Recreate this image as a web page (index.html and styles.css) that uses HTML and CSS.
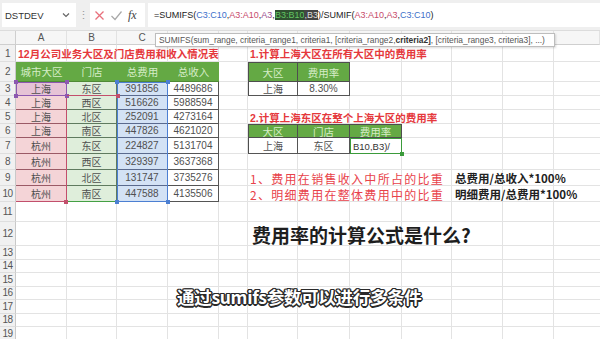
FILE: index.html
```html
<!DOCTYPE html>
<html>
<head>
<meta charset="utf-8">
<link rel="stylesheet" href="styles.css">
</head>
<body>
<div class="app">
  <div class="topbar">
    <div class="namebox"><span class="name">DSTDEV</span>
      <svg class="chev" width="8" height="6" viewBox="0 0 8 6"><path d="M1 1.5 L4 4.5 L7 1.5" fill="none" stroke="#666" stroke-width="1.2"/></svg>
    </div>
    <div class="sep">&#8942;</div>
    <div class="fxbox">
      <svg width="11" height="11" viewBox="0 0 11 11"><path d="M1.5 1.5 L9.5 9.5 M9.5 1.5 L1.5 9.5" stroke="#e8707c" stroke-width="1.3" fill="none"/></svg>
      <svg width="13" height="11" viewBox="0 0 13 11"><path d="M1.5 6 L5 9.5 L11.5 1.5" stroke="#a8a8a8" stroke-width="1.2" fill="none"/></svg>
      <span class="fx">fx</span>
    </div>
    <div class="formula"><span>=SUMIFS(</span><span class="fb">C3:C10</span><span>,</span><span class="fr">A3:A10</span><span>,</span><span class="fp">A3</span><span>,</span><span class="hg">B3:B10</span><span class="hd">,B3</span><span>)/SUMIF(</span><span class="fr">A3:A10</span><span>,</span><span class="fr">A3</span><span>,</span><span class="fb">C3:C10</span><span>)</span></div>
  </div>

  <div class="sheet">
    <div class="corner ch r0"></div>
    <div class="colh cA r0">A</div><div class="colh cB r0">B</div><div class="colh cC r0">C</div><div class="colh cD r0"></div><div class="colh cE r0"></div><div class="colh cF r0"></div><div class="colh cG r0"></div><div class="colh cH r0"></div><div class="colh cI r0"></div><div class="colh cJ r0"></div><div class="colh cK r0"></div><div class="colh cL r0"></div>

    <div class="rh ch r1">1</div><div class="rh ch r2">2</div><div class="rh ch r3">3</div><div class="rh ch r4">4</div><div class="rh ch r5">5</div><div class="rh ch r6">6</div><div class="rh ch r7">7</div><div class="rh ch r8">8</div><div class="rh ch r9">9</div><div class="rh ch r10">10</div><div class="rh ch r11">11</div><div class="rh ch r12">12</div><div class="rh ch r13">13</div><div class="rh ch r14">14</div><div class="rh ch r15">15</div><div class="rh ch r16">16</div><div class="rh ch r17">17</div><div class="rh ch r18">18</div><div class="rh ch r19">19</div>

    <div class="hl r1"></div><div class="hl r2"></div><div class="hl r3"></div><div class="hl r4"></div><div class="hl r5"></div><div class="hl r6"></div><div class="hl r7"></div><div class="hl r8"></div><div class="hl r9"></div><div class="hl r10"></div><div class="hl r11"></div><div class="hl r12"></div><div class="hl r13"></div><div class="hl r14"></div><div class="hl r15"></div><div class="hl r16"></div><div class="hl r17"></div><div class="hl r18"></div><div class="hl r19"></div>
    <div class="vl cA"></div><div class="vl cB"></div><div class="vl cC"></div><div class="vl cD"></div><div class="vl cE"></div><div class="vl cF"></div><div class="vl cG"></div><div class="vl cH"></div><div class="vl cI"></div><div class="vl cJ"></div><div class="vl cK"></div>

    <!-- left table -->
    <div class="title t-left">12月公司业务大区及门店费用和收入情况表</div>
    <div class="th thl cA r2">城市大区</div><div class="th thl cB r2">门店</div><div class="th thl cC r2">总费用</div><div class="th thl cD r2">总收入</div>

    <div class="td pa pa3 cA r3">上海</div><div class="td gb cB r3">东区</div><div class="td bc cC r3">391856</div><div class="td wd cD r3">4489686</div>
    <div class="td pa cA r4">上海</div><div class="td gb cB r4">西区</div><div class="td bc cC r4">516626</div><div class="td wd cD r4">5988594</div>
    <div class="td pa cA r5">上海</div><div class="td gb cB r5">北区</div><div class="td bc cC r5">252091</div><div class="td wd cD r5">4273164</div>
    <div class="td pa cA r6">上海</div><div class="td gb cB r6">南区</div><div class="td bc cC r6">447826</div><div class="td wd cD r6">4621020</div>
    <div class="td pa cA r7">杭州</div><div class="td gb cB r7">东区</div><div class="td bc cC r7">224827</div><div class="td wd cD r7">5131704</div>
    <div class="td pa cA r8">杭州</div><div class="td gb cB r8">西区</div><div class="td bc cC r8">329397</div><div class="td wd cD r8">3637368</div>
    <div class="td pa cA r9">杭州</div><div class="td gb cB r9">北区</div><div class="td bc cC r9">131747</div><div class="td wd cD r9">3735276</div>
    <div class="td pa cA r10">杭州</div><div class="td gb cB r10">南区</div><div class="td bc cC r10">447588</div><div class="td wd cD r10">4135506</div>

    <div class="sel sel-a"></div>
    <div class="sel sel-b"><i class="hd-bl hrc"></i></div>
    <div class="sel sel-c"><i class="hd-tl hbc"></i><i class="hd-tr hbc"></i><i class="hd-bl hbc"></i><i class="hd-br hbc"></i></div>
    <div class="sel sel-a3"><i class="hd-tl hpc"></i><i class="hd-tr hpc"></i><i class="hd-bl hpc"></i><i class="hd-br hpc"></i></div>
    <div class="sel sel-b3"><i class="hd-br hrc"></i></div>

    <!-- right table 1 -->
    <div class="title t-r1">1.计算上海大区在所有大区中的费用率</div>
    <div class="th thr bl bt cF r2">大区</div><div class="th thr bt cG r2">费用率</div>
    <div class="td wd bl cF r3">上海</div><div class="td wd cG r3">8.30%</div>

    <!-- right table 2 -->
    <div class="title t-r2">2.计算上海东区在整个上海大区的费用率</div>
    <div class="th thr bl bt cF r6">大区</div><div class="th thr bt cG r6">门店</div><div class="th thr bt cH r6">费用率</div>
    <div class="td wd bl cF r7">上海</div><div class="td wd cG r7">东区</div><div class="td wd edit cH r7">B10,B3)/<i class="hd-br hgc"></i></div>

    <div class="note n1"><span class="nred">1、费用在销售收入中所占的比重</span><span class="nblk">总费用/总收入*100%</span></div>
    <div class="note n2"><span class="nred">2、明细费用在整体费用中的比重</span><span class="nblk">明细费用/总费用*100%</span></div>

    <div class="question">费用率的计算公式是什么?</div>
  </div>

  <div class="tooltip">SUMIFS(sum_range, criteria_range1, criteria1, [criteria_range2, <b>criteria2]</b>, [criteria_range3, criteria3], ...)</div>
  <div class="subtitle">通过sumifs参数可以进行多条件</div>
</div>
</body>
</html>
```

FILE: styles.css
```css
* { box-sizing: border-box; margin: 0; padding: 0; }
body { width: 600px; height: 339px; overflow: hidden; background: #fff;
  font-family: "Liberation Sans", "Noto Sans CJK SC", sans-serif; }
.app { position: relative; width: 600px; height: 339px; overflow: hidden; }

/* top bar */
.topbar { height: 31px; background: #efefef; display: flex; align-items: center; padding: 3px 0 3px 2px; border-bottom: 1px solid #dcdcdc; }
.namebox { width: 74px; height: 24px; background: #fff; display: flex; align-items: center; justify-content: space-between; padding: 0 6px 0 3px; }
.name { font-size: 9.5px; color: #333; }
.sep { width: 14px; text-align: center; color: #999; font-size: 11px; }
.fxbox { width: 55px; height: 24px; background: #fff; display: flex; align-items: center; gap: 5px; padding-left: 4px; }
.fx { font-family: "Liberation Serif", serif; font-style: italic; font-size: 12px; color: #444; }
.formula { flex: 1; height: 24px; margin-left: 3px; background: #fff; display: flex; align-items: center; padding-left: 6px; font-size: 9px; color: #222; white-space: nowrap; }
.fb { color: #3d6fca; }
.fr { color: #c74b6b; }
.fp { color: #9a4f8f; }
.hg { background: #2f5030; color: #62c462; }
.hd { background: #444; color: #ddd; }

/* sheet grid */
.sheet { display: grid;
  grid-template-columns: 16px 51px 50px 51px 51px 29px 50px 52px 52px 50px 51px 51px 1fr;
  grid-template-rows: 14px 17px 20px repeat(4, 14px) repeat(4, 16px) 20px 24px repeat(7, 13.5px); }

.r0{grid-row:1}.r1{grid-row:2}.r2{grid-row:3}.r3{grid-row:4}.r4{grid-row:5}.r5{grid-row:6}.r6{grid-row:7}.r7{grid-row:8}.r8{grid-row:9}.r9{grid-row:10}.r10{grid-row:11}.r11{grid-row:12}.r12{grid-row:13}.r13{grid-row:14}.r14{grid-row:15}.r15{grid-row:16}.r16{grid-row:17}.r17{grid-row:18}.r18{grid-row:19}.r19{grid-row:20}
.ch{grid-column:1}.cA{grid-column:2}.cB{grid-column:3}.cC{grid-column:4}.cD{grid-column:5}.cE{grid-column:6}.cF{grid-column:7}.cG{grid-column:8}.cH{grid-column:9}.cI{grid-column:10}.cJ{grid-column:11}.cK{grid-column:12}.cL{grid-column:13}

.corner { background: #f3f3f3; border-right: 1px solid #cfcfcf; border-bottom: 1px solid #cfcfcf; }
.colh { background: #f6f6f6; border-bottom: 1px solid #cfcfcf; border-right: 1px solid #e2e2e2; font-size: 10px; color: #555; display: flex; align-items: center; justify-content: center; }
.rh { background: #f1f1f1; border-right: 1px solid #c9c9c9; border-bottom: 1px solid #dedede; font-size: 10px; color: #555; display: flex; align-items: center; justify-content: center; letter-spacing: -0.5px; }
.hl { grid-column: 2 / -1; border-bottom: 1px solid #e3e3e3; }
.vl { grid-row: 2 / -1; border-right: 1px solid #e3e3e3; }

.title { grid-row: 2; color: #e5383c; font-weight: bold; font-size: 10.5px; white-space: nowrap; display: flex; align-items: center; padding-left: 2px; }
.t-left { grid-column: 2 / 7; }
.t-r1 { grid-column: 7 / 12; }
.t-r2 { grid-row: 6; grid-column: 7 / 12; }

.th { background: #64a944; display: flex; align-items: center; justify-content: center; font-size: 10.5px; color: #d6edc7; }
.thl { border-bottom: 1px solid #4f8a36; }
.thr { border-right: 1px solid #4e4e4e; border-bottom: 1px solid #4e4e4e; }
.bl { border-left: 1px solid #4e4e4e; }
.bt { border-top: 1px solid #4e4e4e; }
.td { display: flex; align-items: center; justify-content: center; font-size: 10px; color: #505050; border-right: 1px solid #555; border-bottom: 1px solid #555; white-space: nowrap; }
.pa { background: #f4d4d7; border-color: #9a5a66; }
.pa3 { background: #e6c3d6; }
.gb { background: #dfeedb; border-color: #5f7a5f; }
.bc { background: #d3e2f5; border-color: #5a6a8e; }
.wd { background: #fff; }
.edit { justify-content: flex-start; padding-left: 2px; font-size: 9.5px; color: #333; border: 1.5px solid #3b9b3b; position: relative; }

.sel { position: relative; pointer-events: none; }
.sel-a { grid-column: 2; grid-row: 4 / 12; border: 1.5px solid #c24f6c; border-left: none; }
.sel-b { grid-column: 3; grid-row: 4 / 12; border-bottom: 1.5px solid #44a044; }
.sel-c { grid-column: 4; grid-row: 4 / 12; border: 1.5px solid #4c7fd2; }
.sel-a3 { grid-column: 2; grid-row: 4; border: 1.5px solid #8c58b0; }
.sel-b3 { grid-column: 3; grid-row: 4; border-bottom: 1.5px solid #c24f6c; }
.sel i, .edit i { position: absolute; width: 4px; height: 4px; }
.hd-tl { left: -3px; top: -3px; }
.hd-tr { right: -3px; top: -3px; }
.hd-bl { left: -3px; bottom: -3px; }
.hd-br { right: -3px; bottom: -3px; }
.hbc { background: #4c7fd2; }
.hpc { background: #8c58b0; }
.hrc { background: #c24f6c; }
.hgc { background: #3b9b3b; }

.note { grid-column: 7 / 14; display: flex; align-items: center; white-space: nowrap; padding-left: 2px; }
.n1 { grid-row: 10; }
.n2 { grid-row: 11; }
.nred { width: 205px; color: #e8424a; font-size: 12px; letter-spacing: 1.3px; font-family: "Noto Sans CJK SC", sans-serif; }
.nblk { color: #222; font-weight: bold; font-size: 11.5px; font-family: "Noto Sans CJK SC", sans-serif; }
.question { grid-row: 13; grid-column: 7 / 14; display: flex; align-items: center; padding-left: 4px; font-size: 19px; font-weight: bold; color: #1e1e1e; white-space: nowrap; font-family: "Noto Sans CJK SC", sans-serif; }

.tooltip { position: absolute; left: 155px; top: 33px; width: 400px; height: 14px; background: #fff; border: 1px solid #bdbdbd; box-shadow: 1px 1px 2px rgba(0,0,0,0.15); font-size: 8.4px; color: #555; display: flex; align-items: center; padding-left: 3px; white-space: nowrap; overflow: hidden; }
.tooltip b { color: #333; }
.subtitle { position: absolute; left: 177px; top: 284px; font-family: "Noto Sans CJK SC", sans-serif; font-weight: bold; font-size: 17.5px; color: #fff; white-space: nowrap; letter-spacing: -0.3px;
  text-shadow: -1px -1px 0 #2a2a2a, 1px -1px 0 #2a2a2a, -1px 1px 0 #2a2a2a, 1px 1px 0 #2a2a2a, 0 -1.5px 0 #2a2a2a, 0 1.5px 0 #2a2a2a, -1.5px 0 0 #2a2a2a, 1.5px 0 0 #2a2a2a; }
```
